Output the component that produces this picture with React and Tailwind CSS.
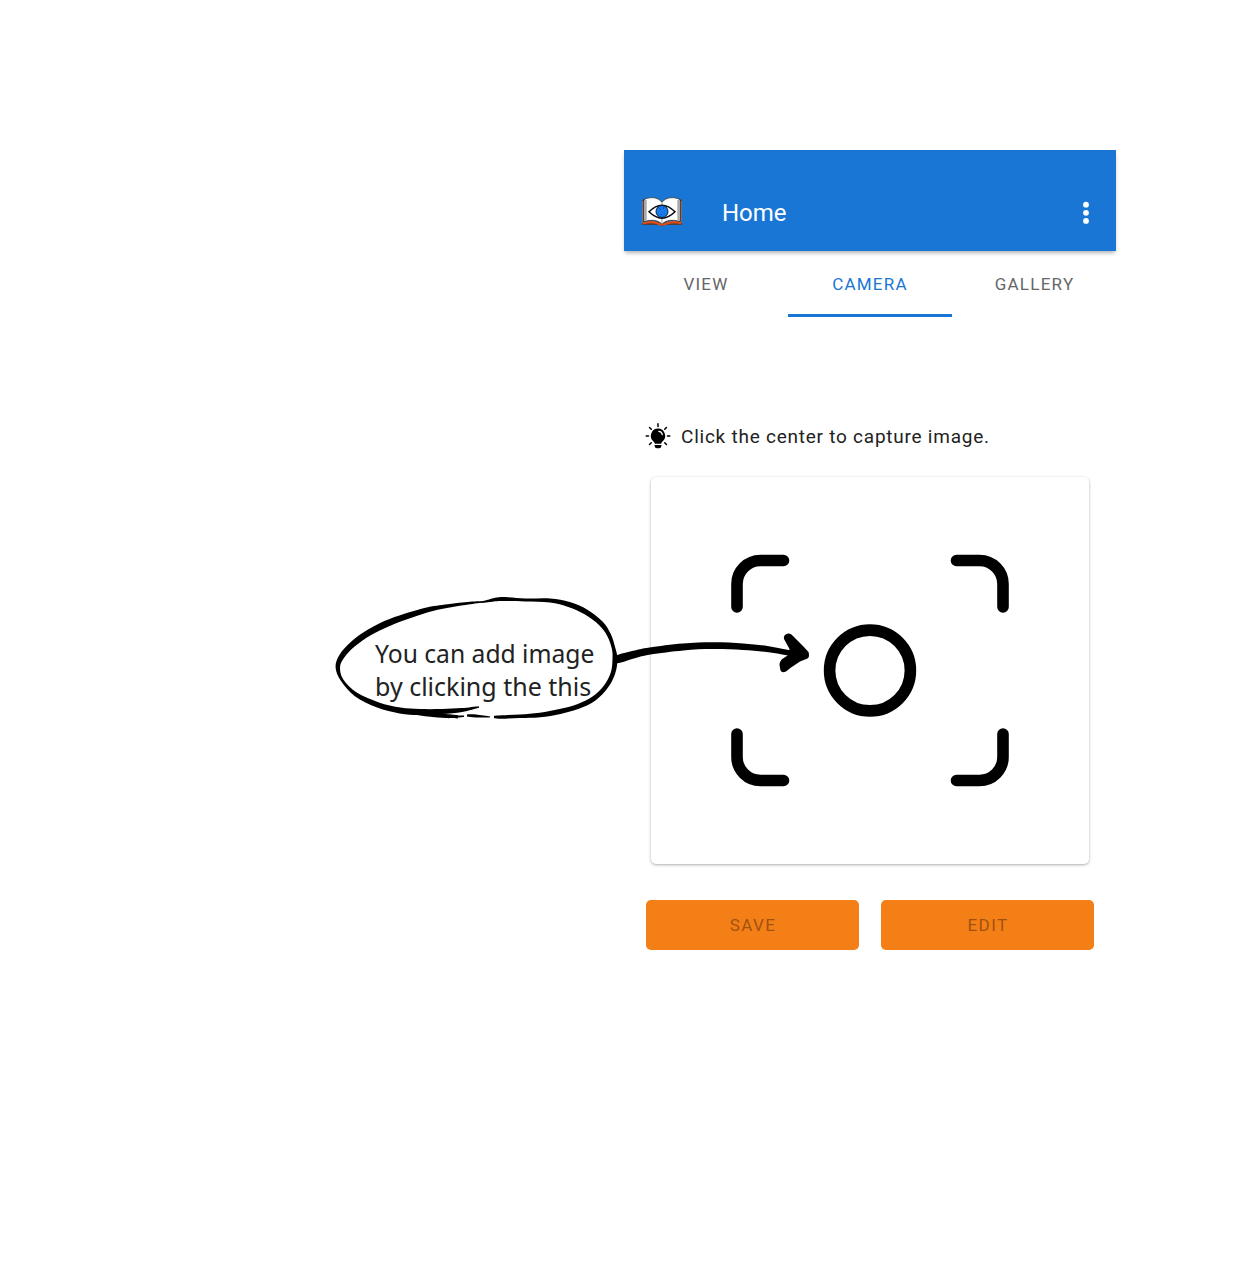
// Turns [x, y, width] samples into a smooth, variable-width brush outline.
function brush(points) {
  const left = [];
  const right = [];
  points.forEach(([x, y, w], i) => {
    const a = points[Math.max(0, i - 1)];
    const b = points[Math.min(points.length - 1, i + 1)];
    const len = Math.hypot(b[0] - a[0], b[1] - a[1]) || 1;
    const nx = (-(b[1] - a[1]) / len) * (w / 2);
    const ny = ((b[0] - a[0]) / len) * (w / 2);
    left.push([x + nx, y + ny]);
    right.unshift([x - nx, y - ny]);
  });
  const curve = (pts) =>
    pts
      .slice(0, -1)
      .map((p, i) => {
        const p0 = pts[Math.max(0, i - 1)];
        const n = pts[i + 1];
        const n2 = pts[Math.min(pts.length - 1, i + 2)];
        return `C${p[0] + (n[0] - p0[0]) / 6} ${p[1] + (n[1] - p0[1]) / 6} ${n[0] - (n2[0] - p[0]) / 6} ${n[1] - (n2[1] - p[1]) / 6} ${n[0]} ${n[1]}`;
      })
      .join("");
  return `M${left[0].join(" ")}${curve(left)}L${right[0].join(" ")}${curve(right)}Z`;
}

const STROKES = [
  [[486, 601.5, 1], [470, 603, 2.5], [448, 606, 3.5], [425, 610.5, 5], [392, 621.5, 6.3], [370, 632, 6.3], [353, 644, 6], [342, 656, 5.5], [337.8, 667, 4.5], [342, 680, 2.8], [356, 694.5, 4], [378, 705, 5.5], [400, 710.5, 6], [420, 712, 6], [442, 711.5, 5], [462, 710, 3.8], [479, 707, 1.5]],
  [[405, 712, 2], [428, 714.5, 4], [446, 716, 4], [458, 716.8, 3.2]],
  [[458, 716.5, 2], [464, 716.3, 1.4]],
  [[467, 715.5, 2], [476, 716, 3], [490, 717, 1.2]],
  [[494, 717, 2.5], [502, 717, 3.5], [520, 716.3, 3.5], [540, 715, 4.5], [560, 711.5, 5], [578, 706.5, 5], [594, 698.5, 5], [606, 686.5, 4.5], [613, 673, 4.5], [615, 659, 5], [613.5, 648, 3.5], [609, 635, 4], [601, 623.5, 5], [586, 612, 5.5], [569, 604.5, 5], [550, 600.5, 4], [525, 600, 3], [501, 599, 4], [488, 601, 2.5], [480, 602.5, 0.8]],
  [[614, 660, 7], [620, 658.5, 8.3], [634, 654.5, 7.5], [650, 651, 7], [683, 647, 6.8], [713, 645.7, 6.8], [743, 646.7, 6.5], [767, 649, 6], [787, 652.5, 5.4], [798, 655, 6]],
];

function BookEye() {
  return (
    <svg className="-mt-[2px] h-[32px] w-[42px] shrink-0" viewBox="0 0 42 32">
      <path d="M1 4L4 2.5V26H38V2.5L41 4V29H24L21 30L18 29H1Z" fill="#4b4141" />
      <path d="M2 27.5Q12 24.5 19 28.4H23Q32 24.5 40 27.5" fill="none" stroke="#e34b16" strokeWidth="2.2" />
      <path d="M1.7 5V27M40.2 5V27" stroke="#a27a73" strokeWidth="1" />
      <path d="M3 4L5 2.5Q15-.5 21 6Q27-.5 37 2.5L39 4V25.5Q27 22 21 28Q15 22 3 25.5Z" fill="#fff" stroke="#303030" strokeWidth=".8" />
      <path d="M4.8 4V25M37.2 4V25" stroke="#aaa" strokeWidth="1.8" />
      <path d="M21 6V9M21 23V28" stroke="#999" strokeWidth="1" />
      <path d="M8 15.8Q21 2.5 34 15.8Q21 28.5 8 15.8Z" fill="#fff" stroke="#080b12" strokeWidth="1.5" />
      <circle cx="21" cy="15.5" r="6" fill="#167be8" stroke="#09213d" strokeWidth="1" />
      <path d="M18 12L20 14M23 11L22 13M20 18L21 19" stroke="#0750b2" />
    </svg>
  );
}

function Bulb() {
  return (
    <svg className="-mt-px h-[26px] w-[26px] shrink-0" viewBox="0 0 26 26">
      <path d="M13 .8V3.5M4.5 4.5L6.3 6.3M21.5 4.5L19.7 6.3M1.2 13H3.5M22.5 13H24.8M4.5 21.5L6.3 19.7M21.5 21.5L19.7 19.7" stroke="#000" strokeWidth="1.5" strokeLinecap="round" />
      <path d="M13 5.5A7.3 7.3 0 0 0 8.5 18.4Q9.6 19.4 9.8 20.8H16.2Q16.4 19.4 17.5 18.4A7.3 7.3 0 0 0 13 5.5Z" />
      <path d="M9.6 22H16.4V23Q16.2 25.2 14 25.2H12Q9.8 25.2 9.6 23Z" />
      <path d="M13.8 8.3Q16.7 8.6 17.3 11.6" fill="none" stroke="#fff" strokeWidth="1.2" strokeLinecap="round" />
    </svg>
  );
}

function Annotation() {
  return (
    <div className="pointer-events-none absolute left-[325px] top-[585px] h-[145px] w-[500px]">
      <svg className="absolute inset-0 h-full w-full" viewBox="325 585 500 145">
        {STROKES.map((s, i) => (
          <path key={i} d={brush(s)} />
        ))}
        <path d="M784 639Q783 634.5 788 633.5Q791 633 793 636L803 646L808.5 652Q810 657 807.5 658.5L800 661.5L791 667.5L786 671.5Q782 673.5 780.5 670.5L779.5 665Q779.5 661 783 658.5L789 654.5L789.5 649Z" />
      </svg>
      <div className="relative ml-[50px] w-max whitespace-nowrap pt-[52px] font-['Noto_Sans'] text-[26px] leading-[33px] text-[#222]">
        <p className="origin-left scale-x-[.948]">You can add image</p>
        <p className="origin-left scale-x-[.962]">by clicking the this</p>
      </div>
    </div>
  );
}

export default function App() {
  return (
    <div className="relative h-[1280px] w-[1260px] overflow-hidden bg-white pl-[624px] pt-[150px] font-[Roboto,sans-serif]">
      <main className="w-[492px]">
        <header className="flex h-[101px] items-center bg-[#1a76d4] pl-[17px] pr-[26px] pt-[24px] text-white shadow-[0_3px_4px_-1px_rgba(0,0,0,.3)]">
          <BookEye />
          <h1 className="ml-[39px] mt-px text-[24px] leading-[30px]">Home</h1>
          <svg className="ml-auto h-[24px] w-[8px]" viewBox="0 0 8 24" fill="#fff">
            <circle cx="4" cy="3.7" r="2.9" />
            <circle cx="4" cy="11.8" r="2.9" />
            <circle cx="4" cy="19.9" r="2.9" />
          </svg>
        </header>
        <nav className="grid h-[66px] grid-cols-3 text-center text-[17px] leading-[67px] tracking-[1.25px] text-[#666]">
          <a className="h-[66px]">VIEW</a>
          <a className="h-[66px] border-b-[3px] border-[#1a76d4] text-[#1a76d4]">CAMERA</a>
          <a className="h-[66px] pl-px">GALLERY</a>
        </nav>
        <div className="mt-[105px] flex h-[28px] items-center pl-[21px]">
          <Bulb />
          <p className="ml-[10px] pt-[2px] text-[19px] tracking-[.76px] text-[#222]">Click the center to capture image.</p>
        </div>
        <section className="ml-[27px] mt-[27px] h-[387px] w-[438px] rounded-[5px] bg-white shadow-[0_1px_3px_rgba(0,0,0,.32)]">
          <svg className="h-full w-full" viewBox="651 477 438 387" fill="none" stroke="#000" strokeWidth="11.6" strokeLinecap="round">
            <path d="M737 607V584A23.5 23.5 0 0 1 760.5 560.5H783.5M956.5 560.5H979.5A23.5 23.5 0 0 1 1003 584V607M737 734V757A23.5 23.5 0 0 0 760.5 780.5H783.5M956.5 780.5H979.5A23.5 23.5 0 0 0 1003 757V734" />
            <circle cx="870" cy="670.5" r="40.4" />
          </svg>
        </section>
        <div className="mt-[36px] grid grid-cols-2 gap-[22px] pl-[22px] pr-[22px]">
          <button className="h-[50px] rounded-[5px] bg-[#f57f17] pl-px pt-[2px] text-[17px] tracking-[1.4px] text-[#a0530f]">SAVE</button>
          <button className="h-[50px] rounded-[5px] bg-[#f57f17] pl-px pt-[2px] text-[17px] tracking-[1.4px] text-[#a0530f]">EDIT</button>
        </div>
      </main>
      <Annotation />
    </div>
  );
}
